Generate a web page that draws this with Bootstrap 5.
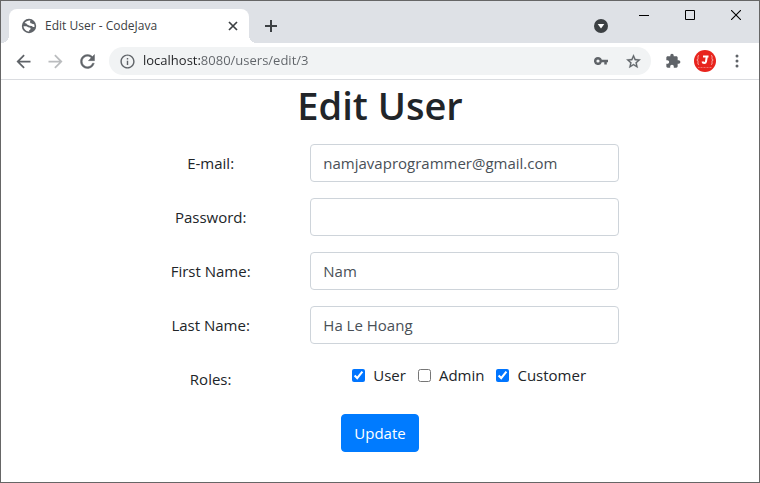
<!DOCTYPE html>
<html lang="en">
<head>
<meta charset="utf-8">
<meta name="viewport" content="width=device-width, initial-scale=1">
<title>Edit User - CodeJava</title>
<link href="https://cdn.jsdelivr.net/npm/bootstrap@5.3.0/dist/css/bootstrap.min.css" rel="stylesheet">
<style>
  body { font-family: "Open Sans", "Noto Sans", sans-serif; font-size: 15px; color: #212529; }
  svg { display: block; flex: none; fill: currentColor; }
  .window { border: 1px solid #666; }
  .tab-strip { background: #dee1e6; height: 42px; padding-left: 8px; }
  .page-tab { background: #fff; width: 240px; height: 34px; border-radius: 8px 8px 0 0; padding: 0 8px 0 12px; font-size: 12px; color: #3c4043; position: relative; }
  .page-tab::before, .page-tab::after { content: ""; position: absolute; bottom: 0; width: 8px; height: 8px; }
  .page-tab::before { right: 100%; background: radial-gradient(circle at 0 0, transparent 8px, #fff 8px); }
  .page-tab::after { left: 100%; background: radial-gradient(circle at 100% 0, transparent 8px, #fff 8px); }
  .icon-btn { border: 0; padding: 0; background: none; display: flex; align-items: center; justify-content: center; flex: none; color: #5f6368; width: 32px; height: 28px; }
  .icon-btn.faded { color: #babcbe; }
  .tab-btn { color: #3c4043; height: 34px; }
  .close-tab { width: 16px; height: 16px; color: #3c4043; }
  .caption-btn { width: 46px; height: 28px; color: #000; }
  .toolbar { height: 37px; padding: 0 6px; border-bottom: 1px solid #dadce0; }
  .address { background: #f1f3f4; border-radius: 14px; height: 28px; padding: 0 2px 0 10px; margin: 0 6px; }
  .address input { border: 0; padding: 0; outline: 0; font-size: 13px; min-width: 0; color: transparent; caret-color: #202124;
    background: linear-gradient(90deg, #202124 58px, #5f6368 58px); -webkit-background-clip: text; background-clip: text; }
  .form-page { padding-top: 1px; }
  .form-page h1 { font-size: 38px; font-weight: 600; line-height: 48px; margin-bottom: 15px; }
  .user-form { max-width: 508px; }
  .user-form .row { --bs-gutter-x: 30px; margin: 0 0 16px; min-height: 38px; }
  .user-form .form-control { font-size: 15px; line-height: 24px; padding: 6px 12px; color: #495057; border-color: #ced4da; border-radius: 4px; }
  .user-form input[type=checkbox] { width: 13px; height: 13px; margin: 0; accent-color: #0075ff; }
  .btn-update { --bs-btn-bg: #007bff; --bs-btn-border-color: #007bff; font-size: 15px; line-height: 24px; border-radius: 4px; }
</style>
<script src="https://cdn.jsdelivr.net/npm/bootstrap@5.3.0/dist/js/bootstrap.bundle.min.js" defer></script>
</head>
<body>
<div class="window d-flex flex-column min-vh-100">
  <header>
    <div class="tab-strip d-flex align-items-end">
      <div class="page-tab d-flex align-items-center gap-2">
        <svg width="16" height="16" viewBox="0 0 16 16" color="#5f6368"><circle cx="8" cy="8" r="7.200"/><path fill="#fff" d="M9.500 2.600C7 2.300 4.800 3.300 3.600 5l1.700.5c.6.300.6 1 1.300 1.200.9.200 1.100.9 2 1.100l2.200.1c.7.200.7 1 1.500 1.100l1.200-.1c.1-1-.1-1.900-.5-2.800-.8.200-1.500 0-2.100-.5L9.700 5.300c-.6-.5-.4-1-.7-1.500z"/><path fill="#fff" d="M2.500 8.300c.1 1.800 1.200 3.500 2.700 4.400 1 .6 2 .9 3 .8V12c.8-.1 1.400-.6 1.400-1.300 0-.8-.7-1-1.500-1.100C7 9.500 6.500 8.400 5.200 8.300z"/></svg>
        <span class="flex-grow-1">Edit User - CodeJava</span>
        <button class="icon-btn close-tab" aria-label="Close tab"><svg width="10" height="10" viewBox="0 0 10 10"><path fill="none" stroke="currentColor" stroke-width="1.700" d="M1 1l8 8M9 1L1 9"/></svg></button>
      </div>
      <button class="icon-btn tab-btn ms-1 me-auto" aria-label="New tab"><svg class="ms-1" width="14" height="14" viewBox="0 0 14 14"><path d="M6 1h2v5h5v2H8v5H6V8H1V6h5z"/></svg></button>
      <button class="icon-btn tab-btn me-1" aria-label="Search tabs"><svg width="14" height="14" viewBox="0 0 14 14"><circle cx="7" cy="7" r="7"/><path fill="#fff" d="M3.700 5h6.600L7 9.500z"/></svg></button>
      <div class="d-flex align-self-start">
        <button class="icon-btn caption-btn" aria-label="Minimize"><svg width="10" height="11" viewBox="0 0 10 11"><path d="M0 5h10v1H0z"/></svg></button>
        <button class="icon-btn caption-btn" aria-label="Maximize"><svg width="10" height="10" viewBox="0 0 10 10"><path fill="none" stroke="currentColor" d="M.5.5h9v9h-9z"/></svg></button>
        <button class="icon-btn caption-btn" aria-label="Close window"><svg width="10" height="10" viewBox="0 0 10 10"><path fill="none" stroke="currentColor" stroke-width="1.100" d="M0 0l10 10M10 0L0 10"/></svg></button>
      </div>
    </div>
    <div class="toolbar d-flex align-items-center">
      <button class="icon-btn" aria-label="Back"><svg width="21" height="21" viewBox="0 0 24 24"><path d="M20 11H7.830l5.590-5.590L12 4l-8 8 8 8 1.410-1.410L7.830 13H20z"/></svg></button>
      <button class="icon-btn faded" aria-label="Forward"><svg width="21" height="21" viewBox="0 0 24 24"><path d="M4 11h12.170l-5.590-5.590L12 4l8 8-8 8-1.410-1.410L16.170 13H4z"/></svg></button>
      <button class="icon-btn" aria-label="Reload"><svg width="21" height="21" viewBox="0 0 24 24"><path stroke="currentColor" stroke-width=".5" d="M17.650 6.350C16.200 4.900 14.210 4 12 4c-4.420 0-7.990 3.580-7.990 8s3.570 8 7.990 8c3.730 0 6.840-2.550 7.730-6h-2.080c-.82 2.330-3.040 4-5.650 4-3.310 0-6-2.690-6-6s2.690-6 6-6c1.660 0 3.140.69 4.220 1.780L13 11h7V4l-2.350 2.350z"/></svg></button>
      <div class="address d-flex align-items-center flex-grow-1">
        <button class="icon-btn close-tab" aria-label="Site information"><svg width="17" height="17" viewBox="0 0 24 24" color="#5f6368"><path d="M11 7h2v2h-2zm0 4h2v6h-2zm1-9C6.480 2 2 6.480 2 12s4.480 10 10 10 10-4.480 10-10S17.520 2 12 2zm0 18c-4.410 0-8-3.590-8-8s3.590-8 8-8 8 3.590 8 8-3.590 8-8 8z"/></svg></button>
        <input class="flex-grow-1 ms-2" type="text" aria-label="Address" value="localhost:8080/users/edit/3" spellcheck="false">
        <button class="icon-btn" aria-label="Saved passwords"><svg width="14" height="8" viewBox="0 0 14 8"><path fill-rule="evenodd" d="M4 0a4 4 0 0 1 3.800 2.800H14v2.400h-1.200v2.300h-2.500V5.200H7.800A4 4 0 1 1 4 0zm0 2.400a1.600 1.600 0 1 0 0 3.200 1.600 1.600 0 0 0 0-3.200z"/></svg></button>
        <button class="icon-btn" aria-label="Bookmark this page"><svg width="17" height="17" viewBox="0 0 24 24"><path stroke="currentColor" stroke-width=".4" d="M22 9.240l-7.190-.62L12 2 9.190 8.630 2 9.240l5.460 4.730L5.820 21 12 17.270 18.180 21l-1.630-7.030L22 9.240zM12 15.400l-3.760 2.270 1-4.280-3.320-2.880 4.380-.38L12 6.100l1.710 4.040 4.380.38-3.320 2.880 1 4.280L12 15.400z"/></svg></button>
      </div>
      <button class="icon-btn" aria-label="Extensions"><svg width="16" height="16" viewBox="0 0 24 24"><path d="M20.500 11H19V7c0-1.100-.9-2-2-2h-4V3.500C13 2.120 11.880 1 10.500 1S8 2.120 8 3.500V5H4c-1.100 0-1.990.9-1.990 2v3.800H3.500c1.490 0 2.700 1.210 2.700 2.700s-1.210 2.700-2.700 2.700H2V20c0 1.100.9 2 2 2h3.800v-1.500c0-1.490 1.210-2.700 2.700-2.700s2.700 1.210 2.700 2.700V22H17c1.100 0 2-.9 2-2v-4h1.500c1.380 0 2.500-1.120 2.500-2.500S21.880 11 20.500 11z"/></svg></button>
      <button class="icon-btn" aria-label="Profile"><svg width="22" height="22" viewBox="0 0 22 22"><circle cx="11" cy="11" r="11" fill="#e8241d"/><g fill="none" stroke="#fff"><path stroke-opacity=".6" d="M5 5.500c-1.500 0-1 1.500-1 3 0 1-.5 1.500-1.200 1.500.7 0 1.200.5 1.200 1.500 0 1.500-.5 3 1 3M17 5.500c1.500 0 1 1.500 1 3 0 1 .5 1.500 1.200 1.500-.7 0-1.200.5-1.200 1.500 0 1.500.5 3-1 3"/><path stroke-width="2" d="M9 6.500h5.500M12.800 6.500L12 11.500c-.3 1.800-3.200 1.900-3.500 0"/><path stroke-opacity=".35" stroke-dasharray="1 .5" d="M4 17.500h14"/></g></svg></button>
      <button class="icon-btn" aria-label="Menu"><svg width="4" height="14" viewBox="0 0 4 14"><circle cx="2" cy="2" r="1.500"/><circle cx="2" cy="7" r="1.500"/><circle cx="2" cy="12" r="1.500"/></svg></button>
    </div>
  </header>
  <main class="form-page text-center">
    <h1>Edit User</h1>
    <form class="user-form mx-auto">
      <div class="row align-items-center">
        <label class="col-4" for="email">E-mail:</label>
        <div class="col-8"><input class="form-control" type="email" id="email" value="namjavaprogrammer@gmail.com"></div>
      </div>
      <div class="row align-items-center">
        <label class="col-4" for="password">Password:</label>
        <div class="col-8"><input class="form-control" type="password" id="password"></div>
      </div>
      <div class="row align-items-center">
        <label class="col-4" for="first">First Name:</label>
        <div class="col-8"><input class="form-control" type="text" id="first" value="Nam"></div>
      </div>
      <div class="row align-items-center">
        <label class="col-4" for="last">Last Name:</label>
        <div class="col-8"><input class="form-control" type="text" id="last" value="Ha Le Hoang"></div>
      </div>
      <div class="row align-items-center" role="group" aria-labelledby="roles">
        <div class="col-4" id="roles">Roles:</div>
        <div class="col-8 d-flex justify-content-center align-self-start gap-2 pt-1 ps-4">
          <label class="d-flex align-items-center gap-2 me-1"><input type="checkbox" checked>User</label>
          <label class="d-flex align-items-center gap-2 me-1"><input type="checkbox">Admin</label>
          <label class="d-flex align-items-center gap-2"><input type="checkbox" checked>Customer</label>
        </div>
      </div>
      <button class="btn btn-primary btn-update" type="submit">Update</button>
    </form>
  </main>
</div>
</body>
</html>
